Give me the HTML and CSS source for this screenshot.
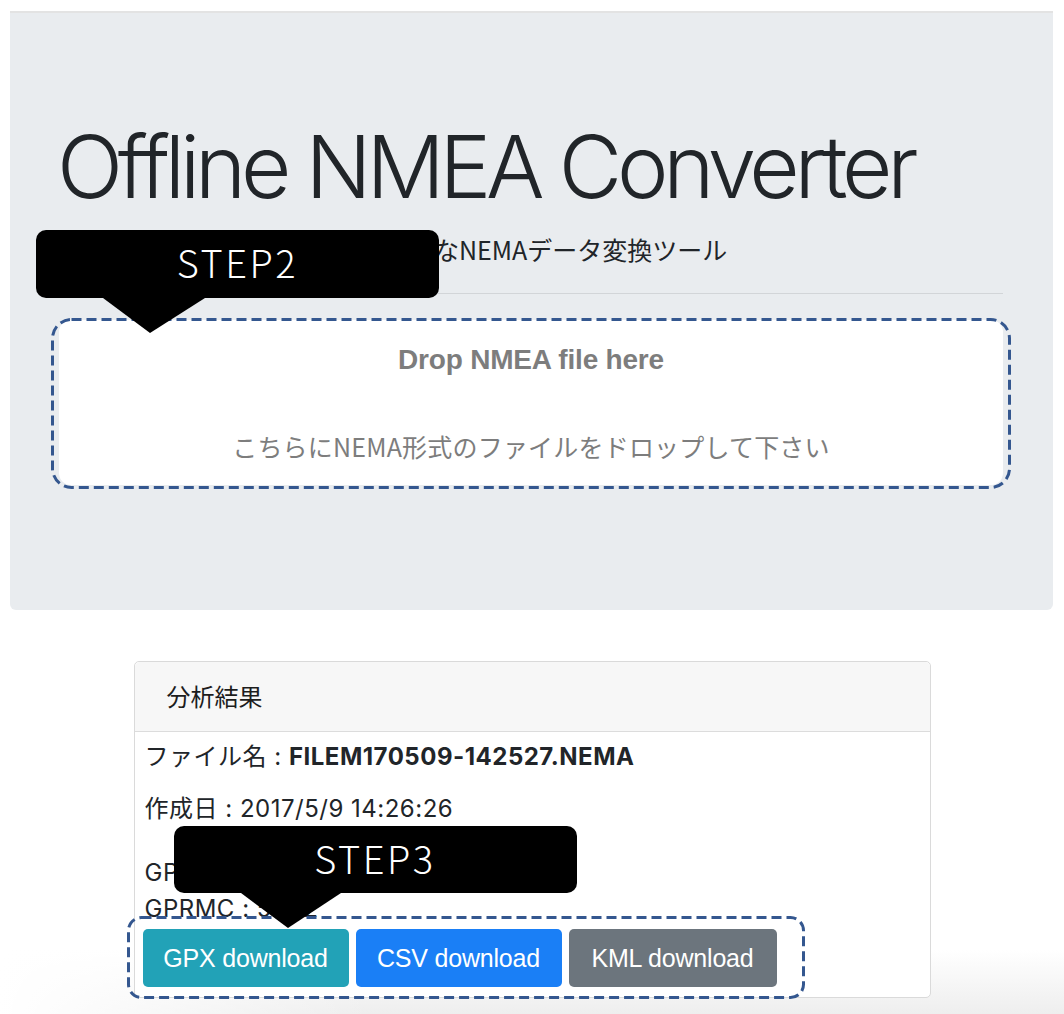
FILE: index.html
```html
<!DOCTYPE html>
<html lang="ja">
<head>
<meta charset="utf-8">
<title>Offline NMEA Converter</title>
<link rel="stylesheet" href="styles.css">
</head>
<body>
<div class="topline"></div>
<header class="jumbotron">
  <h1 class="title">Offline NMEA Converter</h1>
  <p class="lead">ブラウザ上でオフライン動作可能なNEMAデータ変換ツール</p>
  <hr class="rule">
  <div class="dropzone">
    <p class="drop-title">Drop NMEA file here</p>
    <p class="drop-sub">こちらにNEMA形式のファイルをドロップして下さい</p>
    <svg class="dash dash-drop" aria-hidden="true"><rect class="dash-rect" x="1.5" y="1.5" rx="19" ry="19"></rect></svg>
  </div>
  <div class="callout callout-step2">STEP2</div>
</header>

<section class="card">
  <div class="card-header">分析結果</div>
  <div class="card-body">
    <p class="line first">ファイル名 : <b>FILEM170509-142527.NEMA</b></p>
    <p class="line">作成日 : 2017/5/9 14:26:26</p>
    <p class="line third">GPGGA : 5432<br>GPRMC : 5432</p>
    <div class="btn-row">
      <button class="btn btn-info">GPX download</button>
      <button class="btn btn-primary">CSV download</button>
      <button class="btn btn-secondary">KML download</button>
      <svg class="dash dash-btns" aria-hidden="true"><rect class="dash-rect" x="1.5" y="1.5" rx="13" ry="13"></rect></svg>
    </div>
  </div>
  <div class="callout callout-step3">STEP3</div>
</section>
</body>
</html>
```

FILE: styles.css
```css
html, body {
  margin: 0;
  padding: 0;
}

body {
  min-height: 1014px;
  font-family: "Inter", "Noto Sans CJK JP", sans-serif;
  color: #212529;
  background:
    linear-gradient(to right, #ffffff 0%, rgba(255, 255, 255, 0) 35%),
    linear-gradient(to bottom, #ffffff 0px, #ffffff 950px, #eeeeee 1014px);
  background-repeat: no-repeat;
}

.topline {
  height: 2px;
  margin: 11px 11px 0 10px;
  background: #e3e3e3;
}

.jumbotron {
  position: relative;
  box-sizing: border-box;
  height: 597px;
  margin: 0 11px 0 10px;
  padding: 100px 50px 0 49px;
  background: #e9ecef;
  border-radius: 0 0 6px 6px;
}

.title {
  margin: 0 0 0 -2px;
  font-family: "Inter", sans-serif;
  font-weight: 300;
  font-size: 87px;
  line-height: 108px;
  letter-spacing: -5.2px;
  color: #212529;
}

.lead {
  margin: 10px 0 0;
  font-family: "Noto Sans CJK JP", sans-serif;
  font-size: 25px;
  line-height: 36px;
  font-weight: 400;
}

.rule {
  margin: 26px 0 0;
  border: 0;
  height: 1px;
  background: #d2d5d8;
}

.dropzone {
  position: relative;
  margin-top: 26px;
  height: 165px;
  box-sizing: border-box;
  padding-top: 20px;
  background: #ffffff;
  border-radius: 12px;
  text-align: center;
  color: #7d7d7d;
}

.dash {
  position: absolute;
  z-index: 4;
  overflow: visible;
  pointer-events: none;
}

.dash-rect {
  width: calc(100% - 3px);
  height: calc(100% - 3px);
  fill: none;
  stroke: #34578f;
  stroke-width: 3;
  stroke-dasharray: 10 5;
}

.dash-drop {
  top: -2px;
  left: -8px;
  width: calc(100% + 16px);
  height: calc(100% + 6px);
}

.drop-title {
  margin: 0;
  font-family: "Liberation Sans", sans-serif;
  font-weight: 700;
  font-size: 28px;
  line-height: 40px;
  letter-spacing: -0.2px;
}

.drop-sub {
  margin: 48px 0 0;
  font-family: "Noto Sans CJK JP", sans-serif;
  font-size: 25px;
  line-height: 36px;
  letter-spacing: 0.2px;
}

.callout {
  position: absolute;
  z-index: 5;
  width: 403px;
  height: 68px;
  background: #000000;
  border-radius: 10px;
  color: #ffffff;
  font-family: "Noto Sans CJK JP", sans-serif;
  font-weight: 300;
  font-size: 38px;
  line-height: 64px;
  letter-spacing: 2.5px;
  text-align: center;
}

.callout::after {
  content: "";
  position: absolute;
  top: 100%;
  left: 67px;
  width: 0;
  height: 0;
  border-top: 35px solid #000000;
  border-left: 47px solid transparent;
  border-right: 55px solid transparent;
}

.callout-step2 {
  left: 26px;
  top: 217px;
}

.callout-step3 {
  left: 39px;
  top: 164px;
  height: 67px;
}

.callout-step3::after {
  border-left: 47px solid transparent;
  border-right: 53px solid transparent;
}

.card {
  position: relative;
  width: 797px;
  box-sizing: border-box;
  margin: 51px auto 0;
  background: #ffffff;
  border: 1px solid #dadada;
  border-radius: 5px;
}

.card-header {
  height: 69px;
  padding-left: 32px;
  background: #f7f7f7;
  border-bottom: 1px solid #dcdcdc;
  border-radius: 5px 5px 0 0;
  font-family: "Noto Sans CJK JP", sans-serif;
  font-size: 24px;
  line-height: 68px;
  color: #1d1d1d;
}

.card-body {
  padding: 7px 10px 10px 10px;
  font-size: 24px;
  line-height: 36px;
  letter-spacing: 0.5px;
}

.line {
  margin: 0 0 16px;
}

.line b {
  font-weight: 700;
}

.third {
  margin: 28px 0 2px;
}

.btn-row {
  position: relative;
  display: flex;
  gap: 7px;
  width: 634px;
  margin-left: -2px;
}

.dash-btns {
  top: -13px;
  left: -16px;
  width: calc(100% + 44px);
  height: calc(100% + 25px);
}

.btn {
  height: 58px;
  border: 0;
  border-radius: 5px;
  padding: 0;
  color: #ffffff;
  font-family: "Liberation Sans", sans-serif;
  font-size: 25px;
  letter-spacing: -0.2px;
}

.btn-info {
  width: 206px;
  background: #22a2b7;
}

.btn-primary {
  width: 206px;
  background: #1a7ff6;
}

.btn-secondary {
  width: 208px;
  background: #6c757d;
}
```
